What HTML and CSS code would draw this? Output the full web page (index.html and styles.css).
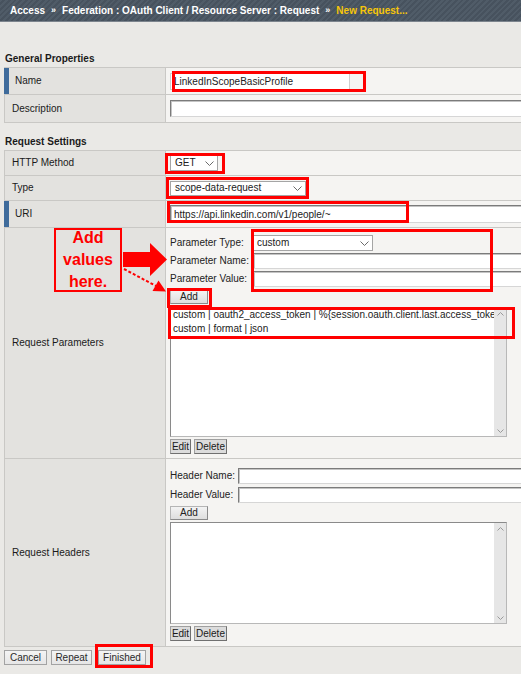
FILE: index.html
```html
<!DOCTYPE html>
<html>
<head>
<meta charset="utf-8">
<title>New Request</title>
<link rel="stylesheet" href="styles.css">
</head>
<body>
<div class="page">
  <div class="topbar">
    <span>Access</span><span class="sep">&raquo;</span><span>Federation : OAuth Client / Resource Server : Request</span><span class="sep">&raquo;</span><span class="cur">New Request...</span>
  </div>

  <div class="sect s1">General Properties</div>
  <div class="table">
    <div class="row h27">
      <div class="label req">Name</div>
      <div class="value"><input class="txt name-in" value="LinkedInScopeBasicProfile"></div>
    </div>
    <div class="row h28">
      <div class="label">Description</div>
      <div class="value"><input class="txt wide" value=""></div>
    </div>
  </div>

  <div class="sect s2">Request Settings</div>
  <div class="table">
    <div class="row h25">
      <div class="label">HTTP Method</div>
      <div class="value">
        <div class="sel sel-get"><span>GET</span><svg viewBox="0 0 9 5"><path d="M0.5 0.5 L4.5 4.5 L8.5 0.5" /></svg></div>
      </div>
    </div>
    <div class="row h25">
      <div class="label">Type</div>
      <div class="value">
        <div class="sel sel-type"><span>scope-data-request</span><svg viewBox="0 0 9 5"><path d="M0.5 0.5 L4.5 4.5 L8.5 0.5" /></svg></div>
      </div>
    </div>
    <div class="row h27">
      <div class="label req">URI</div>
      <div class="value"><input class="txt wide uri" value="https://api.linkedin.com/v1/people/~"></div>
    </div>
    <div class="row h231">
      <div class="label">Request Parameters</div>
      <div class="value stack p-params">
        <div class="fgrid pgrid">
          <span>Parameter Type:</span>
          <div class="sel sel-ptype"><span>custom</span><svg viewBox="0 0 9 5"><path d="M0.5 0.5 L4.5 4.5 L8.5 0.5" /></svg></div>
          <span>Parameter Name:</span>
          <input class="txt fin" value="">
          <span>Parameter Value:</span>
          <input class="txt fin" value="">
        </div>
        <button class="btn add">Add</button>
        <div class="ta ta-params">
          <div class="ta-body">
            <div>custom | oauth2_access_token | %{session.oauth.client.last.access_toke</div>
            <div>custom | format | json</div>
          </div>
          <div class="sb">
            <svg viewBox="0 0 7 4"><path d="M0.5 3.5 L3.5 0.5 L6.5 3.5" /></svg>
            <svg viewBox="0 0 7 4"><path d="M0.5 0.5 L3.5 3.5 L6.5 0.5" /></svg>
          </div>
        </div>
        <div class="pair">
          <button class="btn2 edit">Edit</button>
          <button class="btn2 del">Delete</button>
        </div>
      </div>
    </div>
    <div class="row h188">
      <div class="label">Request Headers</div>
      <div class="value stack p-headers">
        <div class="fgrid hgrid">
          <span>Header Name:</span>
          <input class="txt fin" value="">
          <span>Header Value:</span>
          <input class="txt fin" value="">
        </div>
        <button class="btn add">Add</button>
        <div class="ta ta-headers">
          <div class="ta-body"></div>
          <div class="sb">
            <svg viewBox="0 0 7 4"><path d="M0.5 3.5 L3.5 0.5 L6.5 3.5" /></svg>
            <svg viewBox="0 0 7 4"><path d="M0.5 0.5 L3.5 3.5 L6.5 0.5" /></svg>
          </div>
        </div>
        <div class="pair">
          <button class="btn2 edit">Edit</button>
          <button class="btn2 del">Delete</button>
        </div>
      </div>
    </div>
  </div>

  <div class="actions">
    <button class="abtn cancel">Cancel</button>
    <button class="abtn repeat">Repeat</button>
    <button class="abtn finished">Finished</button>
  </div>

  <!-- annotation overlay -->
  <div class="anno">
    <div class="hl hl-name"></div>
    <div class="hl hl-get"></div>
    <div class="hl hl-type"></div>
    <div class="hl hl-uri"></div>
    <div class="hl hl-params"></div>
    <div class="hl hl-add"></div>
    <div class="hl hl-lines"></div>
    <div class="hl hl-finished"></div>
    <div class="callout"><div class="callout-text">Add<br>values<br>here.</div></div>
    <svg class="arrows" viewBox="0 0 521 674" width="521" height="674">
      <polygon points="123,252 150,252 150,243 167,259.5 150,276 150,267 123,267" fill="#ff0000"/>
      <line x1="124" y1="269" x2="156" y2="286" stroke="#ff0000" stroke-width="2" stroke-dasharray="3 2"/>
      <polygon points="166,291.5 152.5,291 158.5,280.5" fill="#ff0000"/>
    </svg>
  </div>
</div>
</body>
</html>
```

FILE: styles.css
```css
* { box-sizing: border-box; }
html, body { margin: 0; padding: 0; }
body {
  background: #eae9e6;
  font: 10px/1.2 "Liberation Sans", Arial, sans-serif;
  color: #222;
  width: 521px;
  height: 674px;
  overflow: hidden;
}
.page {
  position: relative;
  width: 521px;
  height: 674px;
  overflow: hidden;
}

/* breadcrumb bar */
.topbar {
  height: 22px;
  background: repeating-linear-gradient(135deg, #505c68 0 2px, #47525e 2px 4px);
  border-bottom: 1px solid #7c848d;
  color: #fff;
  font-weight: bold;
  display: flex;
  align-items: center;
  padding-left: 10px;
  white-space: nowrap;
}
.topbar .sep { font-size: 9px; margin: 0 6px; }
.topbar .cur { color: #f6c50a; }

/* section headings */
.sect {
  font-weight: bold;
  height: 17px;
  line-height: 17px;
  padding-left: 5px;
  color: #1a1a1a;
}
.sect.s1 { margin-top: 28px; }
.sect.s2 { margin-top: 10px; }

/* property tables */
.table {
  margin-left: 4px;
  width: 560px;
  border-top: 1px solid #c9c8c5;
}
.row {
  display: grid;
  grid-template-columns: 162px 1fr;
  border-bottom: 1px solid #c9c8c5;
}
.h25 { height: 25px; }
.h27 { height: 27px; }
.h28 { height: 28px; }
.h231 { height: 231px; }
.h188 { height: 188px; }

.label {
  background: #e3e2df;
  border-left: 1px solid #c9c8c5;
  border-right: 1px solid #c9c8c5;
  padding-left: 7px;
  display: flex;
  align-items: center;
  color: #1a1a1a;
}
.label.req {
  border-left: 5px solid #3f6b9b;
  padding-left: 6px;
}
.value {
  background: #f5f4f2;
  padding-left: 4px;
  display: flex;
  align-items: center;
}
.value.stack {
  flex-direction: column;
  align-items: flex-start;
}
.p-params { padding-top: 7px; }
.p-headers { padding-top: 9px; }

/* text inputs */
.txt {
  height: 17px;
  margin: 0;
  border: 1px solid;
  border-color: #7b7b7b #d6d6d6 #d6d6d6 #7b7b7b;
  box-shadow: inset 1px 1px 0 #c4c4c4;
  background: #fff;
  font: 10px "Liberation Sans", Arial, sans-serif;
  color: #222;
  padding: 0 3px;
  outline: none;
}
.name-in { width: 180px; border-color: #cfcfcf; box-shadow: none; }
.wide { width: 380px; }
.uri { height: 18px; }
.fin { width: 300px; height: 16px; }

/* fake selects */
.sel {
  display: flex;
  align-items: center;
  justify-content: space-between;
  background: #fff;
  border: 1px solid #a5a5a5;
  height: 16px;
  padding: 0 3px 0 4px;
  color: #222;
}
.sel svg { width: 9px; height: 5px; fill: none; stroke: #6b6b6b; stroke-width: 1; }
.sel-get { width: 48px; }
.sel-type { width: 136px; height: 15px; }
.sel-ptype { width: 120px; height: 16px; padding-left: 3px; }

/* field grids */
.fgrid {
  display: grid;
  row-gap: 2px;
  align-items: center;
  width: 100%;
}
.pgrid { grid-template-columns: 83px 1fr; }
.hgrid { grid-template-columns: 68px 1fr; row-gap: 3px; }

/* buttons */
.btn {
  width: 38px;
  height: 14px;
  margin-top: 3px;
  padding: 0;
  border: 1px solid;
  border-color: #b5b5b5 #8a8a8a #8a8a8a #b5b5b5;
  background: linear-gradient(#f3f3f3, #dedede);
  font: 10px "Liberation Sans", Arial, sans-serif;
  color: #222;
  line-height: 12px;
}
.pair { display: flex; gap: 3px; margin-top: 2px; }
.btn2 {
  height: 15px;
  padding: 0;
  border: 1px solid;
  border-color: #a0a0a0 #707070 #707070 #a0a0a0;
  background: #dcdcdc;
  font: 10px "Liberation Sans", Arial, sans-serif;
  color: #1a1a1a;
  line-height: 13px;
}
.edit { width: 21px; }
.del { width: 33px; }

/* fake textareas */
.ta {
  width: 337px;
  margin-top: 3px;
  background: #fff;
  border: 1px solid;
  border-color: #8a8a8a #b8b8b8 #b8b8b8 #8a8a8a;
  display: flex;
}
.ta-params { height: 130px; }
.ta-headers { height: 102px; margin-top: 2px; }
.ta-body {
  flex: 1;
  overflow: hidden;
  white-space: nowrap;
  padding: 0 2px;
  line-height: 13.5px;
  color: #222;
}
.sb {
  width: 12px;
  background: #e6e6e6;
  display: flex;
  flex-direction: column;
  justify-content: space-between;
  align-items: center;
  padding: 4px 0 3px;
}
.sb svg { width: 7px; height: 4px; fill: none; stroke: #9a9a9a; stroke-width: 1; }

/* bottom action buttons */
.actions {
  display: flex;
  margin: 3px 0 0 4px;
}
.abtn {
  height: 15px;
  padding: 0;
  border: 1px solid #a3a3a3;
  background: linear-gradient(#f4f4f4, #e6e6e6);
  font: 10px "Liberation Sans", Arial, sans-serif;
  color: #2a2a2a;
  line-height: 13px;
}
.cancel { width: 43px; }
.repeat { width: 41px; margin-left: 4px; }
.finished { width: 48px; margin-left: 6px; }

/* annotation overlay (drawn on top of the form) */
.anno {
  position: absolute;
  left: 0;
  top: 0;
  width: 521px;
  height: 674px;
  pointer-events: none;
}
.hl {
  position: absolute;
  border: 3px solid #ff0000;
}
.hl-name { left: 172px; top: 71px; width: 194px; height: 21px; }
.hl-get { left: 165px; top: 153px; width: 60px; height: 21px; }
.hl-type { left: 166px; top: 177px; width: 143px; height: 22px; }
.hl-uri { left: 167px; top: 201px; width: 242px; height: 22px; }
.hl-params { left: 251px; top: 229px; width: 242px; height: 63px; }
.hl-add { left: 167px; top: 288px; width: 45px; height: 20px; }
.hl-lines { left: 168px; top: 307px; width: 347px; height: 32px; }
.hl-finished { left: 95px; top: 644px; width: 58px; height: 24px; }

.callout {
  position: absolute;
  left: 54px;
  top: 228px;
  width: 68px;
  height: 64px;
  border: 2px solid #ff0000;
  text-align: center;
}
.callout-text {
  margin-top: -3px;
  font: bold 16px/22px "Liberation Sans", Arial, sans-serif;
  color: #ff0000;
}
.arrows {
  position: absolute;
  left: 0;
  top: 0;
}
```
